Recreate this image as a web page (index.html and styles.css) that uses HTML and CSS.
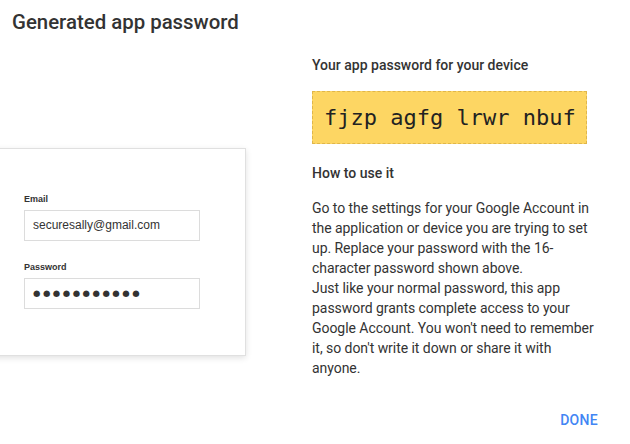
FILE: index.html
```html
<!DOCTYPE html>
<html>
<head>
<meta charset="utf-8">
<link rel="stylesheet" href="styles.css">
</head>
<body>
<div class="dialog">
  <h1 class="title">Generated app password</h1>
  <div class="content">
    <div class="left">
      <div class="card">
        <div class="field-label">Email</div>
        <div class="field">securesally@gmail.com</div>
        <div class="field-label pw-label">Password</div>
        <div class="field dots">●●●●●●●●●●●</div>
      </div>
    </div>
    <div class="right">
      <div class="subhead">Your app password for your device</div>
      <div class="pw-box">fjzp agfg lrwr nbuf</div>
      <div class="subhead how">How to use it</div>
      <p class="body">Go to the settings for your Google Account in the application or device you are trying to set up. Replace your password with the 16-character password shown above.<br>Just like your normal password, this app password grants complete access to your Google Account. You won't need to remember it, so don't write it down or share it with anyone.</p>
    </div>
  </div>
  <div class="actions">
    <button class="done">DONE</button>
  </div>
</div>
</body>
</html>
```
FILE: styles.css
```css
html, body {
  margin: 0;
  padding: 0;
  background: #fff;
}
body {
  font-family: Roboto, "Liberation Sans", sans-serif;
  color: #333;
  width: 630px;
  height: 444px;
  overflow: hidden;
}
.dialog {
  display: flex;
  flex-direction: column;
  height: 444px;
  box-sizing: border-box;
  padding-bottom: 14px;
}
.title {
  margin: 0;
  padding: 10px 12px 0;
  font-size: 20.4px;
  font-weight: 500;
  line-height: 25px;
  color: #333;
}
.content {
  display: flex;
}
.left {
  width: 312px;
  flex: none;
  padding-top: 113px;
}
.card {
  margin-left: -10px;
  width: 256px;
  height: 208px;
  padding: 45px 0 0 33px;
  box-sizing: border-box;
  background: #fff;
  border: 1px solid #e0e0e0;
  box-shadow: 0 2px 6px rgba(0,0,0,0.12);
  font-family: "Liberation Sans", Arial, sans-serif;
}
.field-label {
  font-size: 9px;
  font-weight: bold;
  color: #333;
  line-height: 11px;
  margin-bottom: 5px;
}
.pw-label {
  margin-top: 21px;
}
.field {
  width: 176px;
  height: 31px;
  box-sizing: border-box;
  border: 1px solid #dcdcdc;
  padding: 0 0 0 8px;
  font-size: 12px;
  line-height: 29px;
  color: #333;
}
.dots {
  font-family: "DejaVu Sans", sans-serif;
  font-size: 8.5px;
  letter-spacing: 2.5px;
  color: #333;
}
.right {
  width: 291px;
  padding-top: 20px;
}
.subhead {
  font-size: 14px;
  font-weight: 500;
  line-height: 20px;
  color: #333;
}
.pw-box {
  margin-top: 16px;
  width: 275px;
  height: 53px;
  box-sizing: border-box;
  background: #fdd663;
  border: 1px dashed #e0b64a;
  font-family: "DejaVu Sans Mono", monospace;
  font-size: 22px;
  line-height: 51px;
  padding-left: 11px;
  color: #222;
}
.how {
  margin-top: 19px;
}
.body {
  margin: 15px 0 0;
  font-size: 14px;
  line-height: 20px;
  letter-spacing: -0.05px;
  color: #333;
}
.actions {
  margin-top: auto;
  display: flex;
  justify-content: flex-end;
  padding-right: 32px;
}
.done {
  background: none;
  border: none;
  padding: 0;
  font-family: Roboto, "Liberation Sans", sans-serif;
  font-size: 14px;
  line-height: 20px;
  font-weight: 500;
  color: #4285f4;
  letter-spacing: 0.3px;
}
```
